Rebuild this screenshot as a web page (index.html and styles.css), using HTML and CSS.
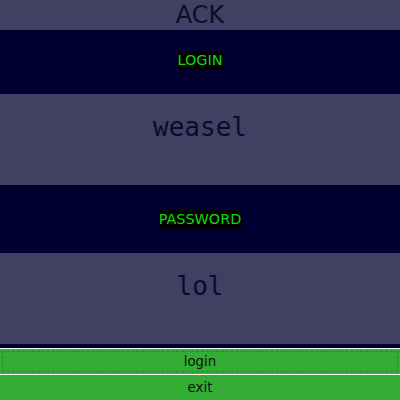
FILE: index.html
```html
<!DOCTYPE html>
<html>
<head>
<meta charset="utf-8">
<link rel="stylesheet" href="styles.css">
</head>
<body>
<div class="app">
  <h1 class="title">ACK</h1>
  <div class="label-band label-band--login"><span class="label">LOGIN</span></div>
  <div class="field">weasel</div>
  <div class="label-band label-band--password"><span class="label">PASSWORD</span></div>
  <div class="field">lol</div>
  <div class="divider"></div>
  <div class="actions">
    <button class="btn btn--focused">login</button>
    <button class="btn">exit</button>
  </div>
</div>
</body>
</html>
```
FILE: styles.css
```css
html, body {
  margin: 0;
  padding: 0;
  background: #404062;
}
.app {
  width: 400px;
  height: 400px;
  display: flex;
  flex-direction: column;
  font-family: "DejaVu Sans", sans-serif;
  overflow: hidden;
}
.title {
  margin: 0;
  height: 30px;
  line-height: 30px;
  font-size: 24px;
  font-weight: normal;
  text-align: center;
  color: #0c0c2c;
  background: #404062;
}
.label-band {
  background: #000030;
  text-align: center;
}
.label-band--login {
  height: 64px;
  padding-top: 20px;
  box-sizing: border-box;
}
.label-band--password {
  height: 68px;
  padding-top: 24px;
  box-sizing: border-box;
}
.label {
  display: inline-block;
  background: #000000;
  color: #14d814;
  font-size: 14.4px;
  line-height: 19px;
  height: 19px;
}
.field {
  height: 91px;
  box-sizing: border-box;
  padding-top: 18px;
  font-family: "DejaVu Sans Mono", monospace;
  font-size: 26px;
  line-height: 30px;
  text-align: center;
  color: #0a0a2c;
  background: #404062;
}
.divider {
  height: 4px;
  background: #000030;
}
.actions {
  flex: 1;
  display: flex;
  flex-direction: column;
  gap: 1px;
  padding-top: 1px;
  background: #ffffff;
}
.btn {
  flex: 1;
  margin: 0;
  border: none;
  padding: 0;
  background: #33ad33;
  color: #111111;
  font-family: "DejaVu Sans", sans-serif;
  font-size: 13.333px;
  text-align: center;
}
.btn--focused {
  outline: 1px dashed #2a8a2a;
  outline-offset: -3px;
}
```
